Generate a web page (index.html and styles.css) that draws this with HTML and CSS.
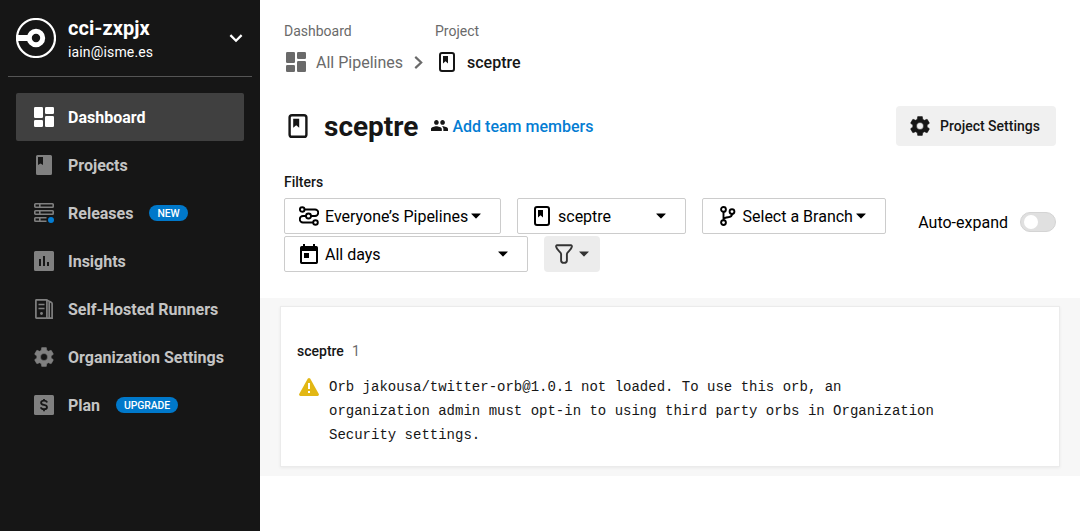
FILE: index.html
```html
<!DOCTYPE html>
<html lang="en">
<head>
<meta charset="utf-8">
<title>sceptre - Pipelines</title>
<link rel="stylesheet" href="styles.css">
</head>
<body>
<svg width="0" height="0" class="defs">
  <symbol id="dash" viewBox="0 0 20 20"><rect x="0" y="0" width="9" height="11" rx="1.3"/><rect x="11" y="0" width="9" height="7" rx="1.3"/><rect x="0" y="13" width="9" height="7" rx="1.3"/><rect x="11" y="9" width="9" height="11" rx="1.3"/></symbol>
  <symbol id="gear" viewBox="2 2 20 20"><path stroke="currentColor" stroke-width=".5" stroke-linejoin="round" d="M19.14 12.94c.04-.3.06-.61.06-.94 0-.32-.02-.64-.07-.94l2.03-1.58c.18-.14.23-.41.12-.61l-1.92-3.32c-.12-.22-.37-.29-.59-.22l-2.39.96c-.5-.38-1.03-.7-1.62-.94l-.36-2.54c-.04-.24-.24-.41-.48-.41h-3.84c-.24 0-.43.17-.47.41l-.36 2.54c-.59.24-1.13.57-1.62.94l-2.39-.96c-.22-.08-.47 0-.59.22L2.74 8.87c-.12.21-.08.47.12.61l2.03 1.58c-.05.3-.09.63-.09.94s.02.64.07.94l-2.03 1.58c-.18.14-.23.41-.12.61l1.92 3.32c.12.22.37.29.59.22l2.39-.96c.5.38 1.03.7 1.62.94l.36 2.54c.05.24.24.41.48.41h3.84c.24 0 .44-.17.47-.41l.36-2.54c.59-.24 1.13-.56 1.62-.94l2.39.96c.22.08.47 0 .59-.22l1.92-3.32c.12-.22.07-.47-.12-.61l-2.01-1.58zM12 15.5a3.5 3.5 0 1 1 0-7 3.500 3.500 0 0 1 0 7z"/></symbol>
  <symbol id="book" viewBox="0 0 16 20"><rect x="1" y="1" width="14" height="18" rx="2" fill="none" stroke="currentColor" stroke-width="2"/><path d="M4 4h5v7.500L6.500 9.300 4 11.500z"/></symbol>
  <symbol id="caret" viewBox="0 0 10 6"><path d="M.6.5h8.800q.6 0 .2.500L5.400 5.200q-.4.400-.8 0L.4 1Q0 .5.6.5z"/></symbol>
</svg>
<div class="app">
  <aside class="sidebar">
    <div class="org">
      <svg class="logo" viewBox="0 0 40 40"><circle cx="20" cy="20" r="19" fill="none" stroke="#fff" stroke-width="2.200"/><circle cx="20" cy="20" r="6.700" fill="none" stroke="#fff" stroke-width="5"/><path d="M1 17h12v6H1z" fill="#fff"/></svg>
      <div class="org-text"><div class="org-name">cci-zxpjx</div><div class="org-mail">iain@isme.es</div></div>
      <svg class="org-chevron" viewBox="0 0 12 8"><path d="M1 1l5 5 5-5" fill="none" stroke="#fff" stroke-width="2"/></svg>
    </div>
    <nav class="nav">
      <a class="nav-item active"><svg class="icon"><use href="#dash"/></svg><span>Dashboard</span></a>
      <a class="nav-item"><svg class="icon" viewBox="0 0 20 20"><path fill-rule="evenodd" d="M3.500 0h13Q18 0 18 1.500v17q0 1.500-1.500 1.500h-13Q2 20 2 18.500v-17Q2 0 3.500 0zM4 2v8l2.500-1.500L9 10V2z"/></svg><span>Projects</span></a>
      <a class="nav-item"><svg class="icon" viewBox="0 0 20 20"><g fill="none" stroke="currentColor" stroke-width="1.600"><rect x=".8" y=".8" width="18.400" height="3.400" rx=".7"/><rect x=".8" y="7.800" width="18.400" height="3.400" rx=".7"/><path d="M12.500 14.800h-11q-.7 0-.7.700v2q0 .7.7.7h11M5.800 1v3.300M5.800 8v3.300M5.800 15v3.300"/></g><circle cx="17" cy="17" r="3" fill="#047dd3"/></svg><span>Releases</span><b class="pill">NEW</b></a>
      <a class="nav-item"><svg class="icon" viewBox="0 0 20 20"><path fill-rule="evenodd" d="M1.500 0h17Q20 0 20 1.500v17q0 1.500-1.500 1.500h-17Q0 20 0 18.500v-17Q0 0 1.500 0zM5 8v7h2V8zM9 5v10h2V5zM13 11v4h2v-4z"/></svg><span>Insights</span></a>
      <a class="nav-item"><svg class="icon" viewBox="0 0 20 20"><g fill="none" stroke="currentColor" stroke-width="1.700"><rect x="1.900" y=".9" width="11" height="18.200" rx=".5"/><path d="M12.500.9l4.200 2.100q1.400.7 1.400 1.600v14.500h-5.200M15.200 2.500v16.600M4.500 5.500h6M4.500 9.500h6"/></g><circle cx="7.500" cy="14.500" r="1.400"/></svg><span>Self-Hosted Runners</span></a>
      <a class="nav-item"><svg class="icon"><use href="#gear"/></svg><span>Organization Settings</span></a>
      <a class="nav-item"><svg class="icon" viewBox="0 0 20 20"><rect width="20" height="20" rx="1.500"/><path d="M13 7.500Q12.700 5.700 10 5.700T7.100 7.700Q7.100 9.500 10 9.900T13 12.200Q13 14.200 10 14.200T7 12.300M10 4v2M10 14v2.200" fill="none" stroke="#161616" stroke-width="1.800"/></svg><span>Plan</span><b class="pill">UPGRADE</b></a>
    </nav>
  </aside>
  <main class="main">
    <div class="crumbs">
      <div class="crumb"><div class="crumb-label">Dashboard</div><div class="crumb-link"><svg class="icon"><use href="#dash"/></svg><span>All Pipelines</span><svg class="crumb-arrow" viewBox="0 0 8 12"><path d="M1 .8L6.500 6 1 11.200" fill="none" stroke="currentColor" stroke-width="2"/></svg></div></div>
      <div class="crumb project"><div class="crumb-label">Project</div><div class="crumb-link"><svg class="book"><use href="#book"/></svg><span>sceptre</span></div></div>
    </div>
    <header class="title-row">
      <svg class="book large"><use href="#book"/></svg>
      <h1>sceptre</h1>
      <a class="team"><svg class="people" viewBox="1 5 22 14"><path d="M16 11c1.660 0 2.990-1.340 2.990-3S17.660 5 16 5s-3 1.340-3 3 1.340 3 3 3zm-8 0c1.660 0 2.990-1.340 2.990-3S9.660 5 8 5 5 6.340 5 8s1.340 3 3 3zm0 2c-2.330 0-7 1.170-7 3.500V19h14v-2.500C15 14.170 10.330 13 8 13zm8 0c-.29 0-.62.020-.97.050 1.160.840 1.970 1.970 1.970 3.450V19h6v-2.500c0-2.330-4.670-3.500-7-3.500z"/></svg><span>Add team members</span></a>
      <button class="settings"><svg class="icon"><use href="#gear"/></svg><span>Project Settings</span></button>
    </header>
    <section class="filters">
      <div class="filters-label">Filters</div>
      <div class="filters-body">
        <div class="filter-list">
          <div class="select everyone"><svg class="icon" viewBox="0 0 20 20"><g fill="none" stroke="currentColor" stroke-width="1.900"><circle cx="3.200" cy="3.500" r="2.300"/><circle cx="9.500" cy="10" r="2.500"/><circle cx="16.500" cy="16.500" r="2.300"/><path d="M5.500 3.500H16a3.250 3.250 0 0 1 0 6.500h-4M7 10H4a3.250 3.250 0 0 0 0 6.500h10.200"/></g></svg><span>Everyone’s Pipelines</span><svg class="caret"><use href="#caret"/></svg></div>
          <div class="select project-pick"><svg class="book"><use href="#book"/></svg><span>sceptre</span><svg class="caret"><use href="#caret"/></svg></div>
          <div class="select branch"><svg class="branch-icon" viewBox="0 0 16 20"><g fill="none" stroke="currentColor" stroke-width="1.900"><circle cx="3.500" cy="3.400" r="2.400"/><circle cx="3.500" cy="16.600" r="2.400"/><circle cx="12" cy="5.600" r="2.400"/><path d="M3.500 5.800v8.400M12 8q0 3-4 3.200-3.500.2-4.500 2"/></g></svg><span>Select a Branch</span><svg class="caret"><use href="#caret"/></svg></div>
          <div class="select days"><svg class="calendar" viewBox="0 0 18 20"><path fill-rule="evenodd" d="M3 0h2v2h8V0h2v2h1.300Q18 2 18 3.700v14.600Q18 20 16.300 20H1.700Q0 20 0 18.300V3.700Q0 2 1.700 2H3zM2 7v11h14V7zM4 9h5v5H4z"/></svg><span>All days</span><svg class="caret"><use href="#caret"/></svg></div>
          <button class="funnel"><svg class="funnel-icon" viewBox="0 0 18 20"><path d="M2 1.200h14q1 .3.900 1.500c-.5 3.500-5 5.500-5 7.300v6.500c0 3.200-5.800 3.200-5.800 0V10c0-1.800-4.500-3.800-5-7.300Q1 1.500 2 1.200z" fill="none" stroke="currentColor" stroke-width="1.900"/></svg><svg class="caret"><use href="#caret"/></svg></button>
        </div>
        <div class="expand"><span>Auto-expand</span><i class="toggle"></i></div>
      </div>
    </section>
    <section class="results">
      <article class="card">
        <div class="card-head"><strong>sceptre</strong><span>1</span></div>
        <div class="message"><svg class="warn" viewBox="0 0 20 18"><path d="M8.700.8q1.300-1.500 2.600 0l8.500 15.300Q20.300 17.800 18.600 18H1.400Q-.3 17.800.2 16.100z" fill="#e2b714"/><path d="M9 5h2v6H9zM9 13h2v2H9z" fill="#fff"/></svg><p>Orb jakousa/twitter-orb@1.0.1 not loaded. To use this orb, an organization admin must opt-in to using third party orbs in Organization Security settings.</p></div>
      </article>
    </section>
  </main>
</div>
</body>
</html>
```

FILE: styles.css
```css
* { box-sizing: border-box; }
body { margin: 0; font-family: Roboto, sans-serif; font-size: 16px; color: #161616; background: #fff; }
svg { flex: none; fill: currentColor; display: block; }
.defs { display: none; }
button { border: 0; font: inherit; color: inherit; }
.app { display: flex; height: 531px; overflow: hidden; }
.icon { width: 20px; height: 20px; }

.sidebar { width: 260px; flex: none; background: #161616; color: #fff; padding: 0 8px; }
.org { height: 77px; padding: 0 8px; display: flex; align-items: center; border-bottom: 1px solid #555; }
.logo { width: 40px; height: 40px; }
.org-text { margin-left: 12px; flex: 1; padding-top: 1px; }
.org-name { font-size: 20px; line-height: 24px; font-weight: 700; letter-spacing: .1px; }
.org-mail { font-size: 14px; line-height: 20px; margin-top: 2px; letter-spacing: .15px; }
.org-chevron { width: 14px; height: 9px; margin-right: 1px; }
.nav { padding: 16px 8px 0; }
.nav-item { display: flex; align-items: center; height: 48px; padding-left: 18px; border-radius: 2px; color: #808080; font-weight: 700; }
.nav-item span { margin-left: 14px; color: #c4c4c4; }
.nav-item.active { background: #404040; color: #fff; }
.nav-item.active span { color: #fff; }
.pill { margin-left: 16px; height: 16px; padding: 0 8px; border-radius: 8px; background: #0078ca; color: #fff; font-size: 10.4px; line-height: 17px; font-weight: 500; letter-spacing: -.1px; }

.main { flex: 1; min-width: 0; }
.crumbs { display: flex; padding: 21px 24px 0; color: #6a6a6a; }
.crumb.project { margin-left: 12px; }
.crumb-label { font-size: 14px; line-height: 20px; }
.crumb-link { display: flex; align-items: center; height: 24px; margin-top: 9px; padding-left: 2px; }
.crumb-link span { margin-left: 10px; }
.crumb-arrow { width: 9px; height: 13px; margin: 0 0 0 11px; }
.book { width: 16px; height: 20px; }
.book.large { width: 20px; height: 24px; }
.project .crumb-link { color: #161616; font-weight: 500; padding-left: 4px; }
.project .crumb-link span { margin-left: 12px; }

.title-row { display: flex; align-items: center; height: 40px; margin: 32px 24px 0; padding-left: 4px; }
h1 { margin: 0 0 0 16px; font-size: 28px; line-height: 40px; font-weight: 700; padding-top: 1px; }
.team { display: flex; align-items: center; margin-left: 13px; font-weight: 500; }
.team span { color: #047dd3; margin-left: 4px; }
.people { width: 17px; height: 11px; margin-top: -1px; }
.settings { display: flex; align-items: center; width: 160px; height: 40px; margin-left: auto; padding: 0 0 0 14px; border-radius: 4px; background: #f0f0f0; font-size: 14px; font-weight: 500; }
.settings span { margin-left: 10px; }

.filters { padding: 26px 24px 0; height: 152px; }
.filters-label { font-size: 14px; line-height: 20px; font-weight: 500; }
.filters-body { display: flex; justify-content: space-between; align-items: flex-start; padding-top: 6px; }
.filter-list { display: flex; flex-wrap: wrap; width: 620px; gap: 2px 16px; color: #000; }
.select { display: flex; align-items: center; height: 36px; padding: 0 19px 0 14px; border: 1px solid #ccc; border-radius: 2px; background: #fff; }
.select span { white-space: nowrap; }
.caret { width: 10px; height: 6px; margin-left: auto; }
.everyone { width: 217px; }
.everyone span, .days span { margin-left: 6px; }
.project-pick { width: 169px; padding-left: 16px; }
.project-pick span { margin-left: 8px; }
.branch { width: 184px; padding-left: 17px; }
.branch-icon { width: 16px; height: 20px; }
.branch span { margin-left: 6.500px; }
.days { width: 244px; padding-left: 15px; }
.calendar { width: 18px; height: 20px; }
.days span { margin-left: 7px; }
.funnel { display: flex; align-items: center; width: 56px; height: 36px; padding: 0 11px; border-radius: 4px; background: #ececec; color: #333; }
.funnel-icon { width: 18px; height: 20px; }
.expand { display: flex; align-items: center; gap: 12px; height: 48px; color: #000; }
.toggle { width: 36px; height: 20px; padding: 2px 3px; border: 1px solid #d4d4d4; border-radius: 10px; background: #e0e0e0; }
.toggle::before { content: ""; display: block; width: 14px; height: 14px; border-radius: 7px; background: #fff; }

.results { height: 178px; padding: 8px 20px 0; background: #f7f7f7; }
.card { height: 161px; padding: 34px 16px 0; border: 1px solid #ebebeb; background: #fff; box-shadow: 0 1px 3px rgba(0,0,0,.06); }
.card-head { display: flex; gap: 8px; font-size: 14px; line-height: 20px; }
.card-head strong { font-weight: 500; }
.card-head span { color: #6a6a6a; }
.message { display: flex; margin-top: 13px; padding-left: 2px; }
.warn { width: 20px; height: 18px; margin-top: 4px; }
.message p { margin: 1px 0 0 10px; width: 620px; font-family: "Liberation Mono", monospace; font-size: 14px; line-height: 24px; }
```
